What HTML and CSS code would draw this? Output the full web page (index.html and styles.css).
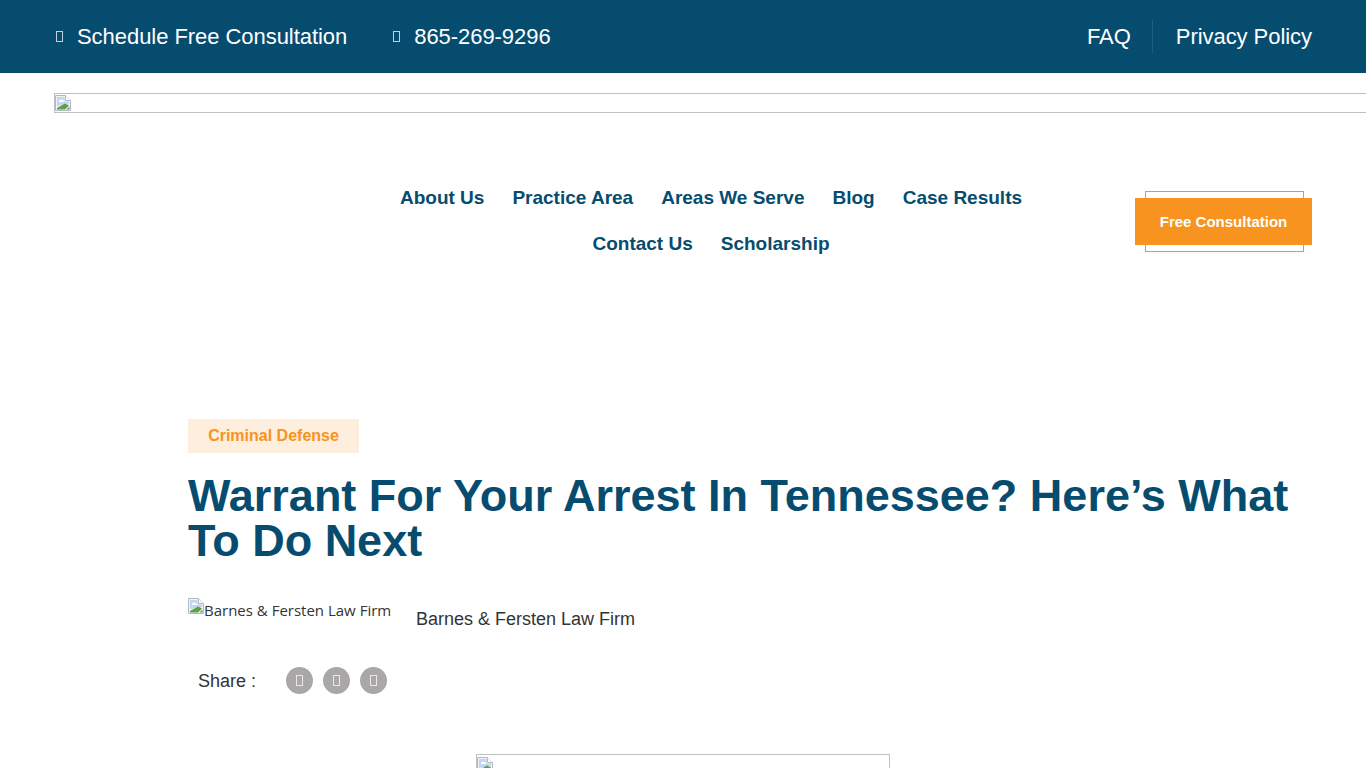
FILE: index.html
```html
<!DOCTYPE html>
<html lang="en">
<head>
    <meta charset="UTF-8">
    <meta name="viewport" content="width=device-width, initial-scale=1.0">
    <title>Warrant For Your Arrest In Tennessee? Here's What To Do Next</title>
    <link rel="stylesheet" href="styles.css">
</head>
<body>
    <svg class="sprite" width="0" height="0" aria-hidden="true">
        <symbol id="broken" viewBox="0 0 16 16">
            <path d="M0.5 0.5H10.500L15.500 5.500V15.500H0.5Z" fill="#eef2fa" stroke="#b4b8c0"/>
            <path d="M10.500 0.5V5.500H15.500" fill="#fff" stroke="#b4b8c0"/>
            <path d="M2 2H9.500V6.500H14V9L2 11Z" fill="#c3d5f3"/>
            <path d="M4 5.500Q6 3.500 8.500 5.500L9 7H4Z" fill="#fff"/>
            <path d="M2 14.500V13L10 8.500L14 10.500L10 14.500Z" fill="#5da142"/>
            <path d="M11.500 14.500L14.500 11.500V14.500Z" fill="#80858e"/>
        </symbol>
    </svg>

    <div class="topbar">
        <div class="topbar-left">
            <a class="top-link"><span class="no-glyph"></span>Schedule Free Consultation</a>
            <a class="top-link"><span class="no-glyph"></span>865-269-9296</a>
        </div>
        <div class="topbar-right">
            <a class="top-page">FAQ</a>
            <a class="top-page">Privacy Policy</a>
        </div>
    </div>

    <div class="logo-box">
        <svg class="broken-icon" width="16" height="16"><use href="#broken"/></svg>
    </div>

    <div class="header-row">
        <nav class="main-nav">
            <a>About Us</a>
            <a>Practice Area</a>
            <a>Areas We Serve</a>
            <a>Blog</a>
            <a>Case Results</a>
            <a>Contact Us</a>
            <a>Scholarship</a>
        </nav>
        <div class="cta-wrap">
            <span class="cta-outline"></span>
            <a class="cta-button">Free Consultation</a>
        </div>
    </div>

    <div class="post">
        <span class="post-tag">Criminal Defense</span>
        <h1>Warrant For Your Arrest In Tennessee? Here’s What To Do Next</h1>
        <div class="author">
            <span class="author-img"><svg class="broken-icon" width="16" height="16"><use href="#broken"/></svg>Barnes &amp; Fersten Law Firm</span>
            <span class="author-name">Barnes &amp; Fersten Law Firm</span>
        </div>
        <div class="share">
            <span class="share-label">Share :</span>
            <a class="share-icon"><span class="no-glyph"></span></a>
            <a class="share-icon"><span class="no-glyph"></span></a>
            <a class="share-icon"><span class="no-glyph"></span></a>
        </div>
    </div>

    <div class="feature-box">
        <svg class="broken-icon" width="16" height="16"><use href="#broken"/></svg>
    </div>
</body>
</html>
```

FILE: styles.css
```css
body {
    margin: 0;
    font-family: "Liberation Sans", Arial, sans-serif;
    background-color: #fff;
    color: #333;
}
.sprite {
    display: block;
    height: 0;
}
.topbar {
    height: 73px;
    background-color: #064c6f;
    color: #fff;
    display: flex;
    justify-content: space-between;
    align-items: center;
    padding: 0 54px;
    font-size: 22px;
    letter-spacing: -0.05px;
}
.topbar-left {
    display: flex;
    gap: 44px;
}
.top-link {
    display: flex;
    align-items: center;
}
.no-glyph {
    display: block;
    width: 5px;
    height: 9px;
    border: 1px solid rgba(255, 255, 255, 0.75);
}
.top-link .no-glyph {
    margin: 0 14px 0 2px;
}
.topbar-right {
    display: flex;
    align-items: center;
}
.top-page {
    line-height: 33px;
    padding-left: 23px;
}
.top-page:first-child {
    padding: 0 21px 0 0;
    border-right: 1px solid #1d5f80;
}
.logo-box {
    margin: 20px 0 0 54px;
    height: 17px;
    padding-top: 1px;
    border: 1px solid #c0c0c0;
    border-right: none;
}
.broken-icon {
    display: block;
    flex: none;
}
.header-row {
    display: flex;
    align-items: center;
    margin-top: 73px;
    padding: 0 54px 0 0;
}
.main-nav {
    width: 700px;
    margin-left: 361px;
    display: flex;
    flex-wrap: wrap;
    justify-content: center;
    column-gap: 28px;
    row-gap: 23px;
    font-size: 19px;
    font-weight: bold;
    line-height: 23px;
    color: #064c6f;
}
.cta-wrap {
    position: relative;
    margin: 2px 0 0 auto;
    width: 177px;
    height: 47px;
}
.cta-outline {
    position: absolute;
    left: 10px;
    right: 8px;
    top: -7px;
    bottom: -7px;
    border: 1px solid #f7931e;
}
.cta-button {
    position: relative;
    display: block;
    height: 47px;
    line-height: 47px;
    text-align: center;
    background-color: #f7931e;
    color: #fff;
    font-size: 15px;
    font-weight: bold;
}
.post {
    margin: 164px 0 0 188px;
}
.post-tag {
    display: inline-block;
    width: 171px;
    height: 34px;
    line-height: 34px;
    text-align: center;
    background-color: #feeedd;
    color: #f7931e;
    font-size: 16px;
    font-weight: bold;
}
h1 {
    margin: 20px 0 0;
    max-width: 1130px;
    font-size: 45px;
    line-height: 45px;
    color: #064c6f;
}
.author {
    display: flex;
    margin-top: 35px;
    height: 40px;
}
.author-img {
    display: flex;
    width: 228px;
    font-family: "Open Sans", sans-serif;
    font-size: 15px;
    line-height: 24px;
    color: #333;
}
.author-name {
    font-size: 18px;
    line-height: 42px;
}
.share {
    display: flex;
    align-items: center;
    margin-top: 29px;
    padding-left: 10px;
    gap: 10px;
}
.share-label {
    width: 78px;
    margin-top: 2px;
    font-size: 18px;
}
.share-icon {
    width: 27px;
    height: 27px;
    border-radius: 50%;
    background-color: #a9a7a8;
    display: flex;
    align-items: center;
    justify-content: center;
}
.feature-box {
    margin: 60px 0 0 476px;
    width: 412px;
    height: 11px;
    padding-top: 2px;
    border: 1px solid #c0c0c0;
    border-bottom: none;
}
```
